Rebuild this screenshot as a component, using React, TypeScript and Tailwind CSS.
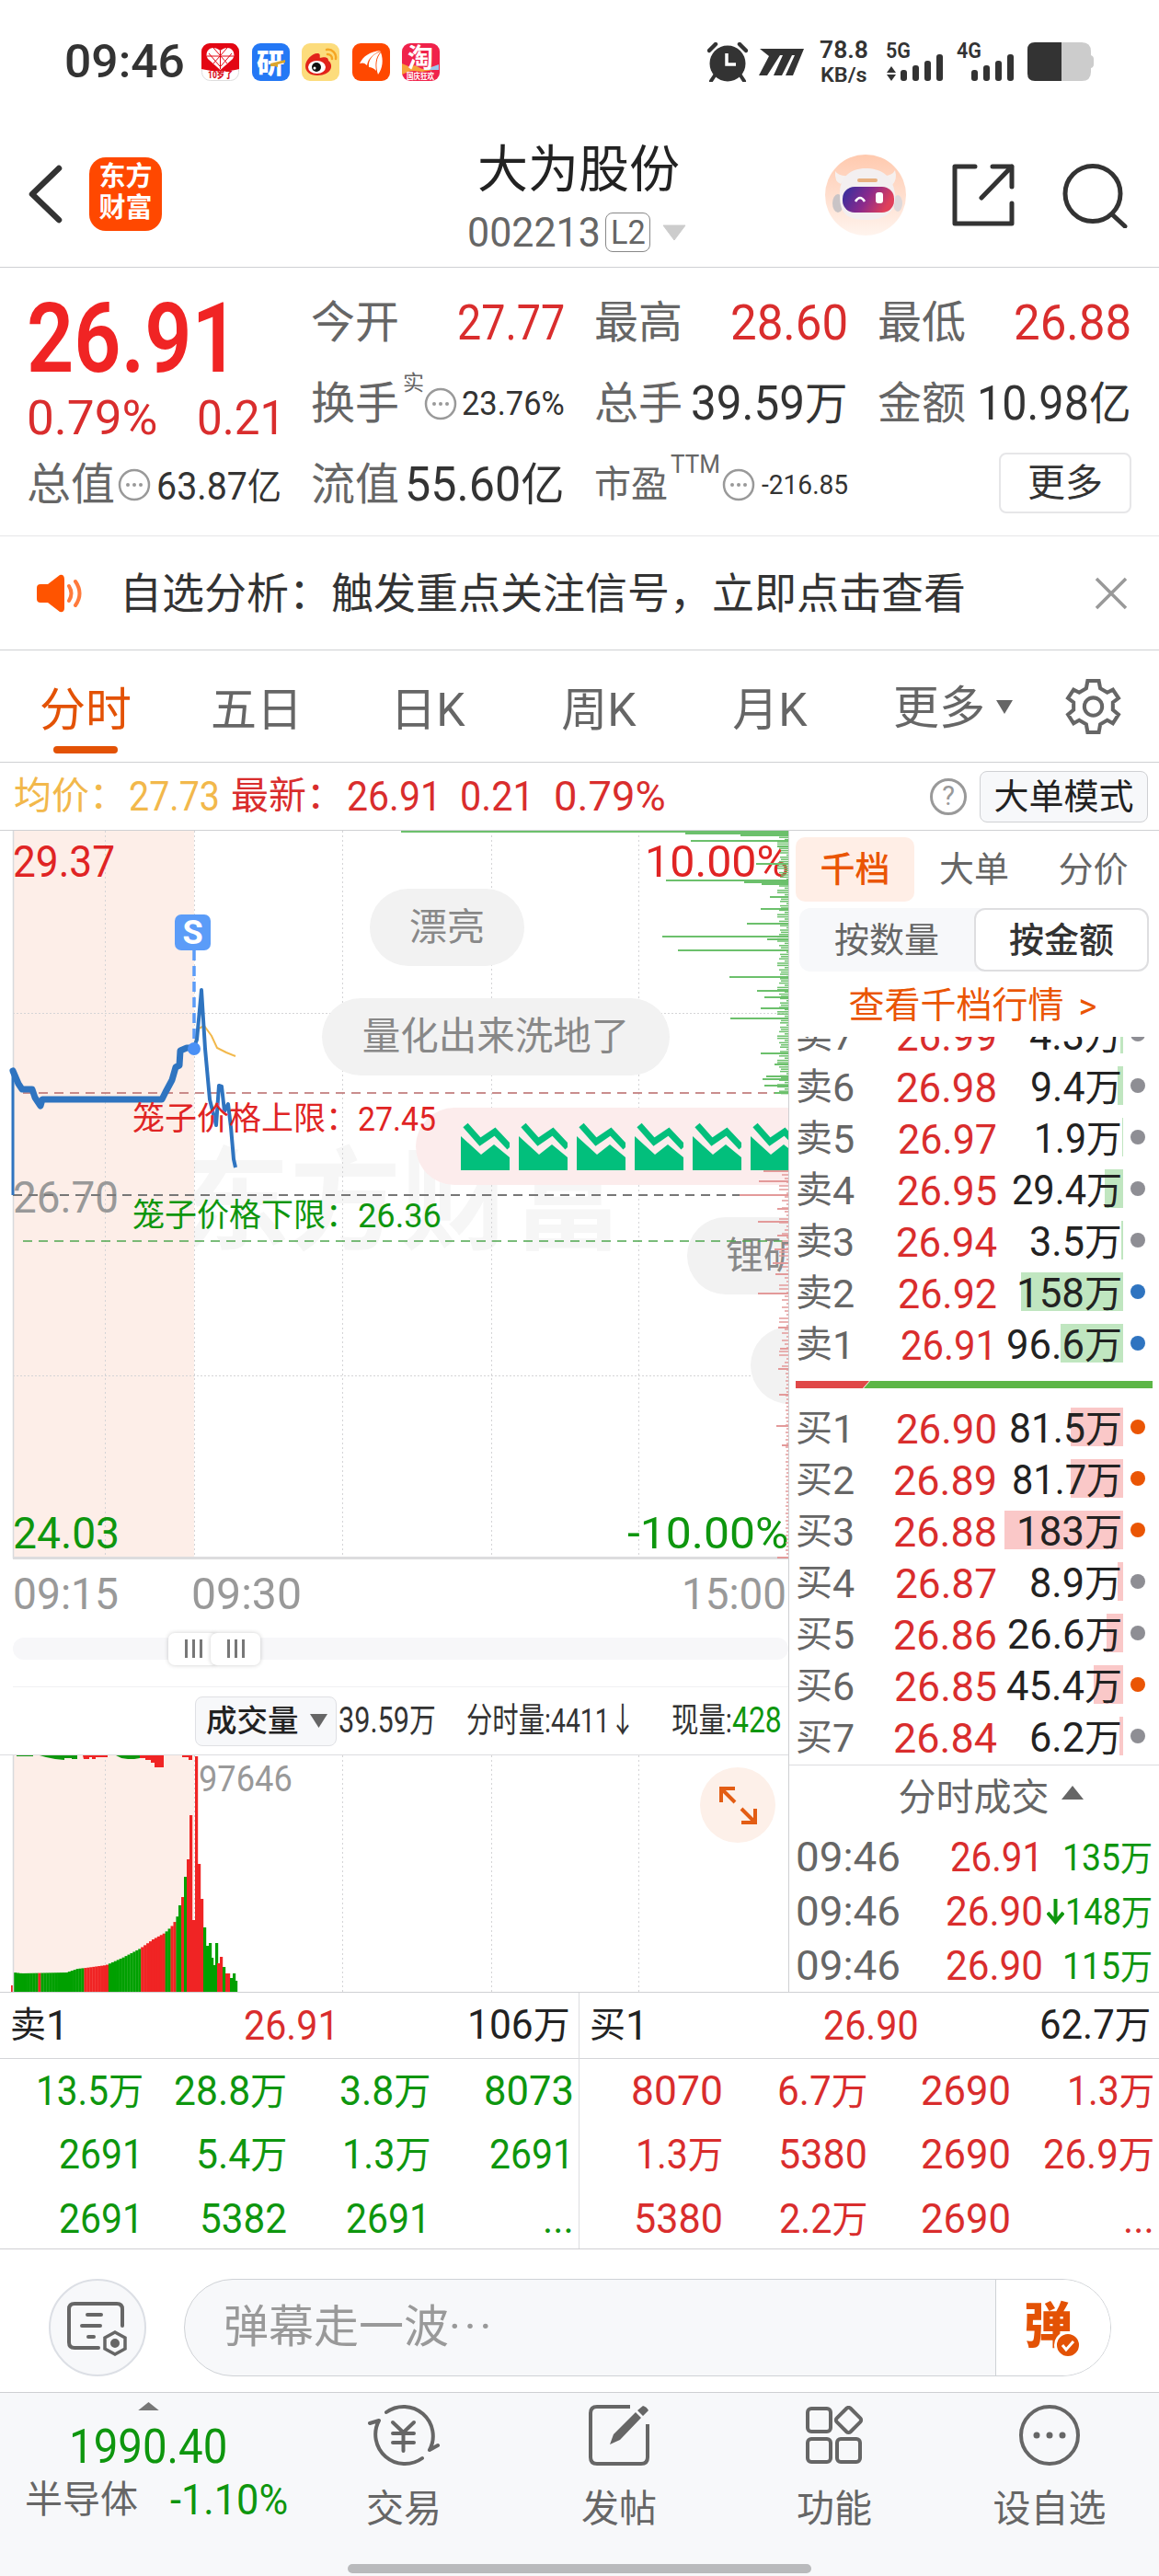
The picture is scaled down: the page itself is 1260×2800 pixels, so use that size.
import React, { useLayoutEffect, useRef } from "react";

interface FitProps {
    text: string;
    w: number;
    className?: string;
}

function Fit({ text, w, className = "" }: FitProps) {
    const ref = useRef<HTMLSpanElement>(null);
    useLayoutEffect(() => {
        const el = ref.current;
        if (el) {
            el.style.transform = `scaleX(${w / el.offsetWidth})`;
        }
    }, [text, w]);
    return (
        <span className="flex shrink-0" style={{ width: w }}>
            <span
                ref={ref}
                className={`inline-block origin-left whitespace-nowrap leading-none ${className}`}
            >
                {text.split(/([万亿])/).map((part, index) =>
                    part === "万" || part === "亿" ? (
                        <span key={index} className="text-[0.94em]">
                            {part}
                        </span>
                    ) : (
                        part
                    )
                )}
            </span>
        </span>
    );
}

function Dots() {
    return (
        <svg className="h-9 w-9 shrink-0" viewBox="0 0 36 36">
            <circle cx="18" cy="18" r="16" fill="none" stroke="#999" strokeWidth="2.5" />
            <circle cx="11" cy="18" r="2" fill="#999" />
            <circle cx="18" cy="18" r="2" fill="#999" />
            <circle cx="25" cy="18" r="2" fill="#999" />
        </svg>
    );
}

function Signal({ label, arrows }: { label: string; arrows?: boolean }) {
    return (
        <svg className="h-[42px] w-[63px] overflow-visible" viewBox="0 0 63 42" fill="#333">
            <text x="0" y="17" fontSize="23" fontWeight="600" textLength="27" lengthAdjust="spacingAndGlyphs">
                {label}
            </text>
            {arrows && <path d="M1 33l5-7 5 7zM1 35h10l-5 7z" />}
            <rect x="16" y="30" width="7" height="12" rx="3" />
            <rect x="29" y="25" width="7" height="17" rx="3" />
            <rect x="42" y="20" width="7" height="22" rx="3" />
            <rect x="55" y="13" width="7" height="29" rx="3" />
        </svg>
    );
}

function StatusBar() {
    return (
        <div className="flex h-[134px] items-center pl-[70px] pr-[71px] text-[#333]">
            <Fit text="09:46" w={131} className="text-[50px] font-medium" />
            <div className="ml-[18px] flex gap-[13.5px]">
                <svg className="h-[41px] w-[41px]" viewBox="0 0 41 41">
                    <rect x="0.5" y="0.5" width="40" height="40" rx="9" fill="#fff" stroke="#ddd" />
                    <path d="M0 28V9a9 9 0 0 1 9-9h23a9 9 0 0 1 9 9v19q-20 5-41 0z" fill="#e30613" />
                    <path d="M20.500 29L7 17C2 9 11 0 20.500 8C30 0 39 9 34 17z" fill="#fff" />
                    <path d="M8 11l12 14M33 11L21 25M13 5l15 17M28 5L13 22M6 14h29M20.500 8v20" stroke="#e30613" strokeWidth="1" fill="none" />
                    <text x="7" y="38" fontSize="10" fontWeight="800" fill="#d8111c" textLength="27" lengthAdjust="spacingAndGlyphs">10岁了</text>
                </svg>
                <svg className="h-[41px] w-[41px]" viewBox="0 0 41 41">
                    <rect width="41" height="41" rx="9" fill="#2478f5" />
                    <text x="5" y="32" fontSize="30" fontWeight="800" fill="#fff">研</text>
                    <path d="M20 22l16-4v3l-8 2v3l-3-1-5 0z" fill="#d9a52e" />
                </svg>
                <svg className="h-[41px] w-[41px]" viewBox="0 0 41 41">
                    <rect width="41" height="41" rx="9" fill="#fcdc7c" />
                    <path d="M4 25c0-7 8-15 14-14 3 1 1 4 2 5 3-1 9-2 9 3 6 4 4 16-12 16C9 35 4 31 4 25z" fill="#e2231a" />
                    <ellipse cx="16.500" cy="26" rx="9.500" ry="7" fill="#fff" />
                    <circle cx="16" cy="26" r="5" fill="#111" />
                    <circle cx="14" cy="27" r="1.500" fill="#fff" />
                    <path d="M27 7c6-1 11 4 10 10M28 12c3 0 5 2 5 5" stroke="#f5a623" strokeWidth="2.500" fill="none" strokeLinecap="round" />
                </svg>
                <svg className="h-[41px] w-[41px]" viewBox="0 0 41 41">
                    <rect width="41" height="41" rx="9" fill="#ff4800" />
                    <path d="M8 22C12 14 19 9 31 8C22 12 17 17 16 24C13 21 11 21 8 22zM18 26C17 18 22 12 31 9C25 16 25 22 26 30C23 27 21 26 18 26zM28 34C25 25 26 16 31 10C34 18 33 27 28 34z" fill="#fff" />
                </svg>
                <svg className="h-[41px] w-[41px]" viewBox="0 0 41 41">
                    <rect width="41" height="41" rx="9" fill="#f0224b" />
                    <path d="M0 22l14 6-14 6zM2 29l12-5 8 4 18-4v4l-18 3z" fill="#f7a13a" />
                    <path d="M24 29l16-6v6z" fill="#9ac7ee" />
                    <text x="6" y="26" fontSize="28" fontWeight="700" fill="#fff">淘</text>
                    <text x="5" y="39" fontSize="9" fontWeight="700" fill="#fff" textLength="30" lengthAdjust="spacingAndGlyphs">国庆狂欢</text>
                </svg>
            </div>
            <div className="ml-auto flex items-center">
                <svg className="h-[43px] w-[44px]" viewBox="0 0 44 43">
                    <circle cx="22" cy="23" r="19.500" fill="#333" />
                    <path d="M2 9l7-7M42 9l-7-7" stroke="#333" strokeWidth="4.500" strokeLinecap="round" />
                    <path d="M8 36l-4 6M36 36l4 6" stroke="#333" strokeWidth="4" strokeLinecap="round" />
                    <path d="M21 12v12h10" stroke="#fff" strokeWidth="3.500" fill="none" />
                </svg>
                <svg className="ml-3 h-[29px] w-[49px]" viewBox="0 0 49 29" fill="#333">
                    <path d="M1 0H49L37 29H29L39 7H36L25 29H16L26 7H23L9 29H0L11 8z" />
                </svg>
                <div className="ml-[17px] flex flex-col items-center gap-1 text-[25px]">
                    <Fit text="78.8" w={53} className="font-semibold" />
                    <Fit text="KB/s" w={51} className="text-[22px] font-semibold" />
                </div>
                <div className="ml-[19px]">
                    <Signal label="5G" arrows />
                </div>
                <div className="ml-[14px]">
                    <Signal label="4G" />
                </div>
                <svg className="ml-[14px] h-[42px] w-[72px]" viewBox="0 0 72 42">
                    <path d="M37 0H59q10 0 10 10v4q3 1 3 4v6q0 3-3 4v4q0 10-10 10H37z" fill="#ccc" />
                    <path d="M37 0H8Q0 0 0 8V34q0 8 8 8H37z" fill="#333" />
                </svg>
            </div>
        </div>
    );
}

function Header() {
    return (
        <div className="flex h-[157px] border-b border-[#cfd0d3] pl-[31px] pr-[34px]">
            <div className="flex w-[331px] items-center pb-[2px]">
                <svg className="h-[64px] w-[37px]" viewBox="0 0 37 64">
                    <path d="M33 4L4 32l29 28" stroke="#333" strokeWidth="6.500" fill="none" strokeLinecap="round" strokeLinejoin="round" />
                </svg>
                <div className="ml-[29px] flex h-[80px] w-[79px] flex-col items-center justify-center rounded-[18px] bg-[#ff4800] pb-1 text-[29px] font-bold leading-[34px] text-white">
                    <span>东方</span>
                    <span>财富</span>
                </div>
            </div>
            <div className="flex flex-1 flex-col items-center pt-[21px]">
                <div className="text-[55px] leading-[58px] text-[#222]">大为股份</div>
                <div className="mt-[17px] flex items-center pr-1 text-[#666]">
                    <Fit text="002213" w={145} className="text-[45px]" />
                    <div className="ml-[5px] flex h-[43px] w-[49px] items-center justify-center rounded-lg border border-[#888]">
                        <Fit text="L2" w={38} className="text-[37px]" />
                    </div>
                    <svg className="ml-[13px] h-[18px] w-[26px]" viewBox="0 0 26 18">
                        <path d="M1 1h24L13 17z" fill="#ccc" stroke="#ccc" strokeLinejoin="round" />
                    </svg>
                </div>
            </div>
            <div className="flex w-[330px] items-center justify-end">
                <svg className="h-[88px] w-[88px]" viewBox="0 0 88 88">
                    <defs>
                        <linearGradient id="halo" x1="0" y1="0" x2="0" y2="1">
                            <stop offset="0" stopColor="#ffc9ae" />
                            <stop offset="1" stopColor="#fff4ee" />
                        </linearGradient>
                        <linearGradient id="visor" x1="0" y1="0" x2="1" y2="0.300">
                            <stop offset="0" stopColor="#2c2fa0" />
                            <stop offset="0.550" stopColor="#8a2a8c" />
                            <stop offset="1" stopColor="#e0405a" />
                        </linearGradient>
                    </defs>
                    <circle cx="44" cy="44" r="44" fill="url(#halo)" />
                    <ellipse cx="14" cy="53" rx="6" ry="10" fill="#c9c4c6" />
                    <ellipse cx="79" cy="53" rx="5" ry="9" fill="#ddd8da" />
                    <path d="M11 18q-1 12 6 14l8-9q-10 1-14-5zM76 17q3 10-3 16l-9-10q9 0 12-6z" fill="#f6f0ee" />
                    <path d="M16 45C15 24 28 15 44 15S73 22 76 42C78 62 66 71 46 71S16 66 16 45z" fill="#f3eff0" />
                    <rect x="19" y="35" width="56" height="28" rx="13" fill="url(#visor)" />
                    <rect x="35" y="26" width="22" height="4" rx="2" fill="#e8b080" />
                    <path d="M33 51q5-8 10 0" stroke="#fff" strokeWidth="2.500" fill="none" />
                    <rect x="55" y="41" width="8" height="12" rx="3" fill="#fff" />
                </svg>
                <svg className="ml-[50px] h-[68px] w-[68px]" viewBox="0 0 68 68" fill="none" stroke="#333" strokeWidth="5" strokeLinecap="round" strokeLinejoin="round">
                    <path d="M25 3H3V65H65V43M44 3H65V25M65 3L32 37" />
                </svg>
                <svg className="ml-[52px] h-[71px] w-[71px]" viewBox="0 0 71 71" fill="none" stroke="#333" strokeWidth="5" strokeLinecap="round">
                    <circle cx="33" cy="33.500" r="30" />
                    <path d="M54 56L68 69" />
                </svg>
            </div>
        </div>
    );
}

function Quote() {
    return (
        <div className="grid h-[292px] auto-rows-[88px] grid-cols-[277px_276px_276px_276px] gap-x-8 border-b border-[#e6e6e8] pl-[29px] pt-4 text-[48px] leading-none text-[#666]">
            <div className="row-span-2">
                <div className="flex h-[122px] items-center">
                    <Fit text="26.91" w={231} className="text-[105px] font-semibold text-[#f02424]" />
                </div>
                <div className="flex h-[52px] items-center justify-between text-[52px] text-[#d92d2d]">
                    <Fit text="0.79%" w={142} />
                    <span className="-mr-1">
                        <Fit text="0.21" w={96} />
                    </span>
                </div>
            </div>
            <div className="flex items-center justify-between">
                今开 <Fit text="27.77" w={117} className="text-[53px] text-[#d92d2d]" />
            </div>
            <div className="flex items-center justify-between">
                最高 <Fit text="28.60" w={128} className="text-[53px] text-[#d92d2d]" />
            </div>
            <div className="flex items-center justify-between">
                最低 <Fit text="26.88" w={128} className="text-[53px] text-[#d92d2d]" />
            </div>
            <div className="flex items-center">
                换手
                <span className="mb-[46px] ml-1 text-[23px]">实</span>
                <Dots />
                <span className="ml-auto">
                    <Fit text="23.76%" w={112} className="text-[36px] text-[#333]" />
                </span>
            </div>
            <div className="flex items-center justify-between">
                总手 <Fit text="39.59万" w={171} className="text-[52px] text-[#333]" />
            </div>
            <div className="flex items-center justify-between">
                金额 <Fit text="10.98亿" w={168} className="text-[52px] text-[#333]" />
            </div>
            <div className="flex items-center">
                总值
                <span className="ml-[3px]">
                    <Dots />
                </span>
                <span className="ml-auto pt-1">
                    <Fit text="63.87亿" w={136} className="text-[42px] text-[#333]" />
                </span>
            </div>
            <div className="flex items-center justify-between">
                流值 <Fit text="55.60亿" w={174} className="text-[52px] text-[#333]" />
            </div>
            <div className="flex items-center">
                <span className="text-[40px]">市盈</span>
                <span className="mb-[44px] ml-[3px]">
                    <Fit text="TTM" w={54} className="text-[27px]" />
                </span>
                <span className="ml-[2px]">
                    <Dots />
                </span>
                <span className="ml-auto">
                    <Fit text="-216.85" w={94} className="text-[29px] text-[#333]" />
                </span>
            </div>
            <div className="flex items-center justify-end">
                <span className="mb-1 flex h-[66px] w-[144px] items-center justify-center rounded-lg border-2 border-[#e6e6e8] text-[41px] text-[#333]">
                    更多
                </span>
            </div>
        </div>
    );
}

function Notice() {
    return (
        <div className="flex h-[124px] items-center border-b border-[#cfd0d3] pl-[40px] pr-[34px] text-[#333]">
            <svg className="h-[42px] w-[51px]" viewBox="0 0 51 42">
                <path d="M4 11H12L25 1q5-1 5 5V37q0 5-5 4L12 31H4q-4 0-4-4V15q0-4 4-4z" fill="#ff5400" />
                <path d="M35 13q5 8 0 16M42 8q9 13 0 26" stroke="#ff7a3c" strokeWidth="4" fill="none" strokeLinecap="round" />
            </svg>
            <span className="ml-[39px] whitespace-nowrap text-[46px] leading-none">
                自选分析：触发重点关注信号，立即点击查看
            </span>
            <svg className="ml-auto h-9 w-9" viewBox="0 0 36 36">
                <path d="M2 2l32 32M34 2L2 34" stroke="#999" strokeWidth="3.500" />
            </svg>
        </div>
    );
}

const Tabs = ["分时", "五日", "日K", "周K", "月K"];

function PeriodTabs() {
    return (
        <div className="flex h-[122px] items-center border-b border-[#cfd0d3] text-[50px] leading-none text-[#666]">
            {Tabs.map((tab, index) => (
                <div
                    key={tab}
                    className={
                        index === 0
                            ? "flex h-full w-[186px] flex-col items-center text-[#e35205]"
                            : "flex h-full w-[186px] flex-col items-center"
                    }
                >
                    <span className="mt-[40px]">{tab}</span>
                    {index === 0 && <span className="mt-[14px] h-[8px] w-[70px] rounded-full bg-[#e35205]" />}
                </div>
            ))}
            <div className="ml-[41px] mt-[5px] flex items-center">
                更多
                <svg className="mb-1 ml-[12px] h-[15px] w-[18px]" viewBox="0 0 18 15">
                    <path d="M0 0h18L9 15z" fill="#666" />
                </svg>
            </div>
            <svg className="ml-[57px] h-[61px] w-[61px]" viewBox="0 0 60 60" fill="none" stroke="#666" strokeWidth="4">
                <path d="M24 3H36L37.500 11 45 15.500 51 12.500 57 21.500 51 26V34L57 39 51 48.500 45 45 37.500 49.500 36 58H24L22.500 49.500 15 45 9 48.500 3 39 9 34V26L3 21.500 9 12.500 15 15.500 22.500 11z" />
                <circle cx="30" cy="30.500" r="9.500" />
            </svg>
        </div>
    );
}

function PriceLine() {
    return (
        <div className="flex h-[74px] items-center border-b border-[#cfd0d3] pl-[15px] pr-[12px] text-[41px] leading-none text-[#d92d2d]">
            <span className="w-[125px] whitespace-nowrap text-[#f2b84b]">均价：</span>
            <Fit text="27.73" w={99} className="text-[45px] text-[#f2b84b]" />
            <span className="ml-[12px] w-[126px] whitespace-nowrap">最新：</span>
            <Fit text="26.91" w={103} className="text-[45px]" />
            <span className="ml-[20px]">
                <Fit text="0.21" w={81} className="text-[45px]" />
            </span>
            <span className="ml-[21px]">
                <Fit text="0.79%" w={122} className="text-[45px]" />
            </span>
            <span className="ml-auto flex h-10 w-10 items-center justify-center rounded-full border-[3px] border-[#999] text-[29px] text-[#999]">
                ?
            </span>
            <span className="ml-[14px] flex h-[56px] w-[183px] items-center justify-center rounded-lg border border-[#cfd0d3] bg-[#f7f8fa] text-[38px] text-[#222]">
                大单模式
            </span>
        </div>
    );
}

// [y, left end] of the longer bars of the order distribution
const AskBars = [
    [1, 436], [3, 745], [5, 805], [11, 751], [17, 845], [36, 822], [54, 724], [56, 809], [58, 828],
    [72, 837], [85, 827], [101, 812], [115, 720], [118, 834], [130, 737], [159, 793], [174, 823],
    [181, 831], [193, 827], [204, 794], [242, 827], [254, 842], [267, 833], [270, 829], [277, 831], [285, 842],
];
const BidBars = [
    [370, 830], [381, 825], [396, 804], [411, 845], [425, 824], [440, 845], [455, 842], [470, 840],
    [482, 843], [503, 824], [540, 846], [563, 848], [585, 846], [613, 847], [647, 844], [668, 850], [790, 845],
];

const PricePoints =
    "211,235 214,227 219,173 223,237 228,292 235,320 238,277 241,278 244,305 248,297 251,322 254,357 256,366";
const AuctionPoints =
    "14,261 20,275 24,281 35,281 38,290 44,299 46,292 176,292 180,284 187,271 191,257 195,255 196,239 203,236 211,236";

function GridLines({ height }: { height: number }) {
    return (
        <g stroke="#d4d4d6" strokeDasharray="2 3">
            {[114.5, 211.5, 372.5, 534.5, 694.5].map((x) => (
                <line key={x} x1={x} x2={x} y1="0" y2={height} />
            ))}
        </g>
    );
}

function PriceChart() {
    return (
        <div className="relative h-[792px] overflow-hidden leading-none">
            <div className="absolute left-[194px] top-[344px] text-[121px] font-bold text-[#f6f6f6]">东方财富</div>
            <svg className="absolute left-0 top-0 h-[792px] w-[857px]" viewBox="0 0 857 792" fill="none">
                <rect x="14" y="0" width="197" height="791" fill="#fdeee8" />
                <GridLines height={791} />
                <path d="M14 198.500H857M14 592.500H857" stroke="#d4d4d6" strokeDasharray="2 2" />
                <path d="M14.500 0V791" stroke="#d8d9dc" strokeWidth="1.500" />
                <path d="M14 790.500H857" stroke="#dcdcde" strokeWidth="3" />
            </svg>
            <div className="absolute left-[14px] top-[9px]">
                <Fit text="29.37" w={111} className="text-[49px] text-[#e02424]" />
            </div>
            <div className="absolute -right-px top-[9px]">
                <Fit text="10.00%" w={157} className="text-[49px] text-[#e02424]" />
            </div>
            <div className="absolute left-[14px] top-[374px]">
                <Fit text="26.70" w={115} className="text-[49px] text-[#999]" />
            </div>
            <div className="absolute left-[14px] top-[739px]">
                <Fit text="24.03" w={116} className="text-[49px] text-[#0e960e]" />
            </div>
            <div className="absolute -right-px top-[739px]">
                <Fit text="-10.00%" w={176} className="text-[49px] text-[#0e960e]" />
            </div>

            <div className="absolute left-[402px] top-[63px] flex h-[84px] w-[168px] items-center justify-center rounded-full bg-[#f2f2f2] text-[41px] text-[#888]">
                漂亮
            </div>
            <div className="absolute left-[350px] top-[182px] flex h-[84px] w-[378px] items-center justify-center rounded-full bg-[#f2f2f2] text-[41.5px] text-[#888]">
                量化出来洗地了
            </div>
            <div className="absolute left-[452px] top-[301px] flex h-[84px] w-[500px] items-center gap-[10px] rounded-full bg-[#fcecec] pl-[49px]">
                {[0, 1, 2, 3, 4, 5].map((i) => (
                    <svg key={i} className="h-[52px] w-[53px] shrink-0" viewBox="0 0 53 52">
                        <path d="M0 15L22 35 36 24 53 38V52H0z" fill="#02bf7c" />
                        <path d="M5 3L21 21 37 10 53 27" stroke="#02bf7c" strokeWidth="7" fill="none" />
                    </svg>
                ))}
            </div>
            <div className="absolute left-[747px] top-[420px] flex h-[84px] w-[300px] items-center rounded-full bg-[#f2f2f2] pl-[42px] text-[41px] text-[#888]">
                锂矿
            </div>
            <div className="absolute left-[816px] top-[539px] h-[84px] w-[200px] rounded-full bg-[#f2f2f2]" />

            <svg className="absolute left-0 top-0 h-[792px] w-[857px]" viewBox="0 0 857 792" fill="none">
                <path d="M25 285H857" stroke="#b86a6a" strokeWidth="1.500" strokeDasharray="10 7" />
                <path d="M14 396H857" stroke="#777" strokeWidth="2" strokeDasharray="10 7" />
                <path d="M25 446H857" stroke="#4fa64f" strokeWidth="1.500" strokeDasharray="10 7" />
                <g stroke="#6cc06c" strokeWidth="2">
                    {AskBars.map(([y, x]) => (
                        <line key={y} x1={x} x2="857" y1={y} y2={y} />
                    ))}
                    {Array.from({ length: 120 }, (_, i) => (
                        <line key={i} x1={855 - ((i * i * 7) % 11)} x2="857" y1={i * 2.4} y2={i * 2.4} strokeWidth="1.500" />
                    ))}
                </g>
                <g stroke="#e39a9a" strokeWidth="2">
                    {BidBars.map(([y, x]) => (
                        <line key={y} x1={x} x2="857" y1={y} y2={y} />
                    ))}
                    {Array.from({ length: 105 }, (_, i) => (
                        <line key={i} x1={855 - ((i * i * 5) % (i < 55 ? 9 : 4))} x2="857" y1={370 + i * 4} y2={370 + i * 4} strokeWidth="1.500" />
                    ))}
                </g>
                <path d="M211 130V237" stroke="#5b9cf8" strokeWidth="3.500" strokeDasharray="11 6" />
                <polyline points="211,235 216,215 222,212 230,223 236,236 246,241 256,245" stroke="#f2b84b" strokeWidth="2" />
                <path d="M14 396V261" stroke="#2f74c0" strokeWidth="3" />
                <polyline points={AuctionPoints} stroke="#2f74c0" strokeWidth="7" strokeLinecap="round" strokeLinejoin="round" />
                <polyline points={PricePoints} stroke="#2f74c0" strokeWidth="4" strokeLinejoin="round" />
                <circle cx="211" cy="237" r="7" fill="#4a90f5" />
                <rect x="190" y="91" width="39" height="39" rx="7" fill="#5b9cf8" />
            </svg>
            <div className="absolute left-[190px] top-[93px] w-[39px] text-center text-[36px] font-bold text-white">S</div>
            <div className="absolute left-[144px] top-[295px] flex items-center text-[35px] text-[#e02424]">
                笼子价格上限：
                <Fit text="27.45" w={85} className="text-[37px]" />
            </div>
            <div className="absolute left-[144px] top-[400px] flex items-center text-[35px] text-[#0e960e]">
                笼子价格下限：
                <Fit text="26.36" w={91} className="text-[37px]" />
            </div>
        </div>
    );
}

// Auction part: bar tops at a few x positions, filled in between.
const AuctionTops = [
    [14, 21], [22, 20], [71, 21], [83, 25], [92, 26], [114, 29], [132, 37], [151, 47], [165, 57], [178, 64], [187, 73], [192, 83],
];
const RedRanges = [
    [41, 43], [91, 117], [153, 179], [184, 190],
];
const OpenBars: [number, number, boolean][] = [
    [195, 94, false], [198, 103, true], [201, 125, false], [204, 144, true], [207, 192, true], [210, 78, true],
    [213, 256, true], [216, 139, true], [219, 101, true], [222, 70, false], [225, 50, false], [228, 53, false],
    [230, 37, false], [232, 29, false], [235, 53, false], [237, 31, true], [240, 38, true], [243, 27, false],
    [246, 20, true], [248, 20, true], [251, 15, false], [254, 20, false], [256, 12, false],
];

function auctionHeight(x: number) {
    for (let i = 1; i < AuctionTops.length; i++) {
        const [x1, h1] = AuctionTops[i];
        const [x0, h0] = AuctionTops[i - 1];
        if (x <= x1) {
            return h0 + ((h1 - h0) * (x - x0)) / (x1 - x0);
        }
    }
    return 83;
}

function VolumeChart() {
    const auction = Array.from({ length: 61 }, (_, i) => 15 + i * 2.94);
    return (
        <div className="relative h-[257px] overflow-hidden leading-none">
            <svg className="h-[257px] w-[857px]" viewBox="0 0 857 257">
                <rect x="14" y="0" width="197" height="257" fill="#fdeee8" />
                <GridLines height={257} />
                {auction.map((x) => {
                    const h = auctionHeight(x);
                    const red = RedRanges.some(([a, b]) => x >= a && x < b);
                    return <rect key={x} x={x} y={257 - h} width="3.200" height={h} fill={red ? "#f02424" : "#00a000"} />;
                })}
                {OpenBars.map(([x, h, red]) => (
                    <rect key={x} x={x - 1} y={257 - h} width="3.200" height={h} fill={red ? "#f02424" : "#00a000"} />
                ))}
                <rect x="12" y="250" width="3" height="7" fill="#f02424" />
                <path d="M43 0H84V4H78V3H70V5L60 4 50 2zM126 0H152V3L146 4H139L132 3zM18 0h18v1H18z" fill="#0e960e" />
                <path d="M90 0H117V2H104V4H100V2H97V4H91zM152 0H178V13H168V8H164V5H158V3H152zM198 0H209V5H205V2H198z" fill="#f02424" />
                <path d="M14.500 0V257" stroke="#d8d9dc" strokeWidth="1.500" />
            </svg>
            <div className="absolute left-[216px] top-[7px]">
                <Fit text="97646" w={102} className="text-[38px] text-[#999]" />
            </div>
            <svg className="absolute left-[761px] top-[13px] h-[82px] w-[82px]" viewBox="0 0 82 82">
                <circle cx="41" cy="41" r="41" fill="#fdf0e9" />
                <path d="M38 23H23V38M24 24L38 38M60 45V60H45M59 59L45 45" stroke="#e35d14" strokeWidth="4" fill="none" />
            </svg>
        </div>
    );
}

function Handle() {
    return (
        <div className="flex h-[35px] w-[54px] items-center justify-center gap-[5px] rounded-[7px] bg-white shadow-[0_0_5px_rgba(0,0,0,0.2)]">
            <span className="h-5 w-[3px] bg-[#777]" />
            <span className="h-5 w-[3px] bg-[#777]" />
            <span className="h-5 w-[3px] bg-[#777]" />
        </div>
    );
}

function ChartColumn() {
    return (
        <div className="w-[858px] border-r border-[#cfd0d3] leading-none">
            <PriceChart />
            <div className="flex h-[75px] items-center pl-[14px] pr-[2px] text-[49px] text-[#999]">
                <Fit text="09:15" w={115} />
                <span className="ml-[79px]">
                    <Fit text="09:30" w={120} />
                </span>
                <span className="ml-auto">
                    <Fit text="15:00" w={114} />
                </span>
            </div>
            <div className="mx-[14px] mr-0 flex h-[64px] items-start border-b border-[#f0f0f2] pt-[10px]">
                <div className="flex h-6 w-full items-center rounded-full bg-[#f7f7f9] pl-[169px]">
                    <Handle />
                    <div className="-ml-2">
                        <Handle />
                    </div>
                </div>
            </div>
            <div className="flex h-[74px] items-center border-b border-[#dcdcdf] pl-[212px] text-[33.5px] text-[#333]">
                <span className="flex h-[54px] w-[154px] items-center rounded-lg border border-[#dfe0e4] bg-[#f7f8fa] pl-[11px] font-medium text-[#222]">
                    成交量
                    <svg className="ml-[12px] h-[15px] w-[19px]" viewBox="0 0 19 15">
                        <path d="M0 0h19l-9.500 15z" fill="#666" />
                    </svg>
                </span>
                <span className="ml-[2px]">
                    <Fit text="39.59万" w={106} className="text-[39px]" />
                </span>
                <span className="ml-[33px]">
                    <Fit text="分时量:4411↓" w={184} className="text-[37px]" />
                </span>
                <span className="ml-[39px]">
                    <Fit text="现量:" w={66} className="text-[37px]" />
                </span>
                <Fit text="428" w={54} className="text-[39px] text-[#0e960e]" />
            </div>
            <VolumeChart />
        </div>
    );
}

interface Level {
    name: string;
    price: string;
    priceW: number;
    amount: string;
    amountW: number;
    bar: number;
    dot: string;
}

const gray = "bg-[#8e8e94]";
const blue = "bg-[#2f74c0]";
const orange = "bg-[#ea5504]";

const Sells: Level[] = [
    { name: "卖7", price: "26.99", priceW: 110, amount: "4.3万", amountW: 101, bar: 3, dot: gray },
    { name: "卖6", price: "26.98", priceW: 110, amount: "9.4万", amountW: 100, bar: 6, dot: gray },
    { name: "卖5", price: "26.97", priceW: 108, amount: "1.9万", amountW: 96, bar: 1, dot: gray },
    { name: "卖4", price: "26.95", priceW: 109, amount: "29.4万", amountW: 120, bar: 20, dot: gray },
    { name: "卖3", price: "26.94", priceW: 110, amount: "3.5万", amountW: 101, bar: 2, dot: gray },
    { name: "卖2", price: "26.92", priceW: 108, amount: "158万", amountW: 115, bar: 111, dot: blue },
    { name: "卖1", price: "26.91", priceW: 105, amount: "96.6万", amountW: 126, bar: 68, dot: blue },
];
const Buys: Level[] = [
    { name: "买1", price: "26.90", priceW: 110, amount: "81.5万", amountW: 123, bar: 57, dot: orange },
    { name: "买2", price: "26.89", priceW: 113, amount: "81.7万", amountW: 120, bar: 57, dot: orange },
    { name: "买3", price: "26.88", priceW: 113, amount: "183万", amountW: 115, bar: 129, dot: orange },
    { name: "买4", price: "26.87", priceW: 111, amount: "8.9万", amountW: 101, bar: 6, dot: gray },
    { name: "买5", price: "26.86", priceW: 113, amount: "26.6万", amountW: 125, bar: 18, dot: gray },
    { name: "买6", price: "26.85", priceW: 112, amount: "45.4万", amountW: 126, bar: 32, dot: orange },
    { name: "买7", price: "26.84", priceW: 113, amount: "6.2万", amountW: 101, bar: 4, dot: gray },
];

function LevelRow({ level, barClass }: { level: Level; barClass: string }) {
    return (
        <div className="relative flex h-[56px] shrink-0 items-center pb-[2px] pl-[7px] text-[40px] text-[#666]">
            <span className={`absolute right-[39px] top-1 h-[42px] ${barClass}`} style={{ width: level.bar }} />
            <span className="relative flex w-[100px] items-center">
                {level.name[0]}
                <span className="text-[43px]">{level.name[1]}</span>
            </span>
            <span className="relative flex w-[119px] justify-end">
                <Fit text={level.price} w={level.priceW} className="text-[45px] text-[#d92d2d]" />
            </span>
            <span className="relative flex flex-1 justify-end pr-[40px]">
                <Fit text={level.amount} w={level.amountW} className="text-[45px] text-[#222]" />
            </span>
            <span className={`absolute right-[15px] top-[17px] h-4 w-4 rounded-full ${level.dot}`} />
        </div>
    );
}

const Trades = [
    { price: "26.91", priceW: 101, amount: "135万", amountW: 98, down: false },
    { price: "26.90", priceW: 106, amount: "148万", amountW: 95, down: true },
    { price: "26.90", priceW: 106, amount: "115万", amountW: 98, down: false },
];

function OrderBook() {
    return (
        <div className="flex flex-1 flex-col leading-none">
            <div className="mt-[7px] flex h-[70px] items-center pl-[7px] text-[38px] text-[#666]">
                <span className="flex h-[70px] w-[129px] items-center justify-center rounded-[10px] bg-[#ffeee6] font-medium text-[#ea5504]">
                    千档
                </span>
                <span className="w-[130px] text-center">大单</span>
                <span className="w-[129px] text-center">分价</span>
            </div>
            <div className="ml-[11px] mt-[7px] flex h-[69px] w-[380px] shrink-0 rounded-[12px] bg-[#f7f8fa] text-[38px] text-[#666]">
                <span className="flex w-[190px] items-center justify-center">按数量</span>
                <span className="flex w-[190px] items-center justify-center rounded-[12px] border-2 border-[#dedee0] bg-white font-medium text-[#333]">
                    按金额
                </span>
            </div>
            <div className="flex h-[71px] shrink-0 items-center justify-center pr-[3px] pt-1 text-[39px] text-[#ea5504]">
                查看千档行情 <span className="ml-4 text-[38px]">&gt;</span>
            </div>
            <div className="flex h-[374px] shrink-0 flex-col overflow-hidden">
                <div className="-mt-[28px]">
                    {Sells.map((level) => (
                        <LevelRow key={level.name} level={level} barClass="bg-[#c0e6c0]" />
                    ))}
                </div>
            </div>
            <svg className="ml-[7px] h-[8px] w-[388px] shrink-0" viewBox="0 0 388 8">
                <path d="M0 0H80L73 8H0z" fill="#e04848" />
                <path d="M81 0H388V8H74z" fill="#5cb646" />
            </svg>
            <div className="h-[17px] shrink-0" />
            {Buys.map((level) => (
                <LevelRow key={level.name} level={level} barClass="bg-[#fac8c8]" />
            ))}
            <div className="flex h-[71px] shrink-0 items-center justify-center border-t border-[#dcdcdf] pl-9 text-[41px] text-[#666]">
                分时成交
                <svg className="mb-3 ml-[13px] h-[15px] w-[24px]" viewBox="0 0 24 15">
                    <path d="M0 15L12 0l12 15z" fill="#666" />
                </svg>
            </div>
            {Trades.map((trade, index) => (
                <div key={index} className="flex h-[59px] shrink-0 items-center pl-[7px] pr-[7px]">
                    <Fit text="09:46" w={114} className="text-[45px] text-[#666]" />
                    <span className="flex w-[155px] justify-end">
                        <Fit text={trade.price} w={trade.priceW} className="text-[45px] text-[#d92d2d]" />
                    </span>
                    <svg className={trade.down ? "ml-1 h-7 w-[19px]" : "hidden"} viewBox="0 0 19 28">
                        <path d="M9.500 0V25M1 15l8.500 10L18 15" stroke="#0e960e" strokeWidth="4" fill="none" />
                    </svg>
                    <span className="ml-auto pt-[3px]">
                        <Fit text={trade.amount} w={trade.amountW} className="text-[40px] text-[#0e960e]" />
                    </span>
                </div>
            ))}
        </div>
    );
}

type Cell = [string, number];

const SellCells: Cell[] = [
    ["13.5万", 117], ["28.8万", 123], ["3.8万", 99], ["8073", 98],
    ["2691", 92], ["5.4万", 99], ["1.3万", 96], ["2691", 92],
    ["2691", 92], ["5382", 95], ["2691", 92], ["...", 34],
];
const BuyCells: Cell[] = [
    ["8070", 100], ["6.7万", 98], ["2690", 98], ["1.3万", 95],
    ["1.3万", 95], ["5380", 97], ["2690", 98], ["26.9万", 121],
    ["5380", 97], ["2.2万", 96], ["2690", 98], ["...", 34],
];

interface QueueProps {
    name: string;
    price: string;
    amount: string;
    amountW: number;
    cells: Cell[];
    className: string;
}

function Queue({ name, price, amount, amountW, cells, className }: QueueProps) {
    return (
        <div className="w-[630px] border-r border-[#dcdde0] last:border-r-0">
            <div className="flex h-[72px] items-center border-b border-[#d4d5d8] pl-[11px] pr-[9px] text-[39px] text-[#222]">
                <span className="flex w-[254px] items-center">
                    {name[0]}
                    <span className="text-[44px]">{name[1]}</span>
                </span>
                <Fit text={price} w={104} className="text-[44px] text-[#d92d2d]" />
                <span className="ml-auto">
                    <Fit text={amount} w={amountW} className="text-[44px]" />
                </span>
            </div>
            <div className={`grid auto-rows-[69.5px] grid-cols-4 ${className}`}>
                {cells.map(([text, w], index) => (
                    <div key={index} className="flex items-center justify-end">
                        <Fit text={text} w={w} className="text-[44px]" />
                    </div>
                ))}
            </div>
        </div>
    );
}

function CommentBar() {
    return (
        <div className="flex h-[156px] items-center border-b border-[#cfd0d3] pl-[53px] pt-[14px]">
            <div className="flex h-[106px] w-[106px] items-center justify-center rounded-full border-2 border-[#dcdfe5] bg-[#f7f8fa]">
                <svg className="mt-1 h-[60px] w-[66px]" viewBox="0 0 66 60" fill="none" stroke="#666" strokeWidth="4" strokeLinecap="round">
                    <path d="M34 50H8q-6 0-6-6V8q0-6 6-6H54q6 0 6 6V26" />
                    <path d="M22 14H37M16 26H36M23 38H29" />
                    <path d="M52 33l11 6v12l-11 6-11-6V39z" strokeWidth="3.500" />
                    <circle cx="52" cy="45" r="3" fill="#666" />
                </svg>
            </div>
            <div className="ml-[41px] flex h-[106px] w-[1008px] items-center overflow-hidden rounded-full border border-[#cfd2d6] bg-[#f7f8fa]">
                <span className="flex-1 pl-[42px] text-[49px] leading-none text-[#999]">
                    弹幕走一波<span className="tracking-[4px]">···</span>
                </span>
                <div className="flex h-full w-[125px] items-center border-l border-[#cfd2d6] bg-white pl-[30px]">
                    <div className="relative text-[53px] font-black leading-none text-[#e35205]">
                        弹
                        <svg className="absolute -right-[10px] bottom-[-8px] h-[30px] w-[30px]" viewBox="0 0 30 30">
                            <circle cx="15" cy="15" r="13.500" fill="#e35205" stroke="#fff" strokeWidth="3" />
                            <path d="M9 15l4 5 8-9" stroke="#fff" strokeWidth="3" fill="none" />
                        </svg>
                    </div>
                </div>
            </div>
        </div>
    );
}

const TradeIcon = (
    <svg className="h-[68px] w-[78px]" viewBox="0 0 78 68" fill="none" stroke="#666" strokeWidth="4" strokeLinecap="round" strokeLinejoin="round">
        <path d="M20 9A32 32 0 0 1 67 50L76 45M59 59A32 32 0 0 1 12 18L2 21" />
        <path d="M27 20L38.500 31 50 20M38.500 31V51M27 32H50M27 42H50" />
    </svg>
);
const PostIcon = (
    <svg className="h-[68px] w-[68px]" viewBox="0 0 68 68" fill="none" stroke="#666" strokeWidth="4">
        <path d="M46 3H10Q3 3 3 10V58Q3 65 10 65H58Q65 65 65 58V22" />
        <path d="M24 44L28 33 52 9 58 15 35 39zM54 7L60 2Q64 3 66 7L60 13z" fill="#666" stroke="none" />
    </svg>
);
const FeatureIcon = (
    <svg className="h-[64px] w-[64px]" viewBox="0 0 64 64" fill="none" stroke="#666" strokeWidth="4">
        <rect x="3" y="3" width="25" height="25" rx="4" />
        <rect x="3" y="36" width="25" height="25" rx="4" />
        <rect x="35" y="36" width="25" height="25" rx="4" />
        <rect x="37" y="5" width="21" height="21" rx="3" transform="rotate(45 47.500 15.500)" />
    </svg>
);
const MoreIcon = (
    <svg className="h-[68px] w-[68px]" viewBox="0 0 68 68" fill="#666">
        <circle cx="34" cy="34" r="31" fill="none" stroke="#666" strokeWidth="4" />
        <circle cx="20" cy="34" r="3.500" />
        <circle cx="34" cy="34" r="3.500" />
        <circle cx="48" cy="34" r="3.500" />
    </svg>
);

const NavItems = [
    { title: "交易", icon: TradeIcon },
    { title: "发帖", icon: PostIcon },
    { title: "功能", icon: FeatureIcon },
    { title: "设自选", icon: MoreIcon },
];

function BottomNav() {
    return (
        <div className="h-[199px] bg-[#f7f8fa] leading-none">
            <div className="flex h-[186px]">
                <div className="flex w-[322px] flex-col items-center pt-[10px]">
                    <svg className="h-[9px] w-[25px]" viewBox="0 0 25 10">
                        <path d="M0 10L12.500 0 25 10z" fill="#777" />
                    </svg>
                    <div className="mt-[14px]">
                        <Fit text="1990.40" w={172} className="text-[51px] text-[#0e960e]" />
                    </div>
                    <div className="mt-[9px] flex items-center pl-[18px] text-[41px] text-[#666]">
                        半导体
                        <span className="ml-[35px]">
                            <Fit text="-1.10%" w={128} className="text-[46px] text-[#0e960e]" />
                        </span>
                    </div>
                </div>
                {NavItems.map((item) => (
                    <div key={item.title} className="flex w-[234px] flex-col items-center text-[41px] text-[#666]">
                        <div className="mt-[11px] flex h-[70px] items-center">{item.icon}</div>
                        <span className="mt-[25px]">{item.title}</span>
                    </div>
                ))}
            </div>
            <div className="mx-auto h-[10px] w-[504px] rounded-full bg-[#b9babc]" />
        </div>
    );
}

export default function App() {
    return (
        <div className="h-[2800px] w-[1260px] overflow-hidden bg-white font-[Roboto,'Noto_Sans_CJK_SC',sans-serif]">
            <StatusBar />
            <Header />
            <Quote />
            <Notice />
            <PeriodTabs />
            <PriceLine />
            <div className="flex h-[1262px]">
                <ChartColumn />
                <OrderBook />
            </div>
            <div className="flex h-[280px] border-y border-[#cfd0d3] leading-none">
                <Queue name="卖1" price="26.91" amount="106万" amountW={112} cells={SellCells} className="pr-[5px] text-[#0e960e]" />
                <Queue name="买1" price="26.90" amount="62.7万" amountW={121} cells={BuyCells} className="pr-[5px] text-[#d92d2d]" />
            </div>
            <CommentBar />
            <BottomNav />
        </div>
    );
}
